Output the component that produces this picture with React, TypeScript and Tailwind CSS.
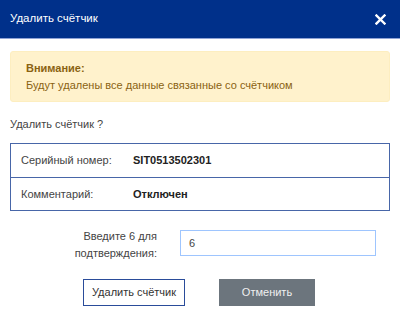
export default function App() {
  return (
    <div className="w-[400px] h-[317px] bg-white font-['Liberation_Sans',sans-serif] text-[11px] text-[#444]">
      {/* Header */}
      <div className="h-[39px] bg-[#00308a] border-b border-[#8fa3d6] flex items-center justify-between pl-[10px] pr-[14px]">
        <span className="text-white text-[11.5px]">Удалить счётчик</span>
        <svg width="11" height="11" viewBox="0 0 11 11">
          <path d="M1.5 1.5 L9.5 9.5 M9.5 1.5 L1.5 9.5" stroke="white" strokeWidth="2.4" strokeLinecap="square" />
        </svg>
      </div>

      <div className="px-[10px] pt-[12px]">
        {/* Warning */}
        <div className="bg-[#fff2cc] border border-[#fdeec0] rounded-[3px] px-[15px] pt-[8px] pb-[7px] text-[#8a6212] leading-[17px]">
          <div className="font-bold">Внимание:</div>
          <div>Будут удалены все данные связанные со счётчиком</div>
        </div>

        <div className="mt-[14px] leading-[17px]">Удалить счётчик ?</div>

        {/* Info table */}
        <div className="mt-[10px] border border-[#4866a8]">
          <div className="flex items-center h-[34px] border-b border-[#4866a8] px-[10px] whitespace-nowrap">
            <span className="w-[112px]">Серийный номер:</span>
            <span className="font-bold text-[#222]">SIT0513502301</span>
          </div>
          <div className="flex items-center h-[32px] px-[10px] whitespace-nowrap">
            <span className="w-[112px]">Комментарий:</span>
            <span className="font-bold text-[#222]">Отключен</span>
          </div>
        </div>

        {/* Confirm input */}
        <div className="mt-[17px] flex items-start">
          <div className="w-[147px] text-right leading-[17px]">
            Введите 6 для
            <br />
            подтверждения:
          </div>
          <div className="mt-[2px] ml-[23px] w-[196px] h-[26px] border border-[#9ec5fe] flex items-center px-[8px] text-[#444]">
            6
          </div>
        </div>

        {/* Buttons */}
        <div className="mt-[17px] flex pl-[73px] gap-[34px]">
          <button className="w-[102px] h-[27px] border border-[#2a4c9a] bg-white text-[#333] whitespace-nowrap">
            Удалить счётчик
          </button>
          <button className="w-[96px] h-[27px] bg-[#6c757d] text-[#f0f0f0]">
            Отменить
          </button>
        </div>
      </div>
    </div>
  );
}
